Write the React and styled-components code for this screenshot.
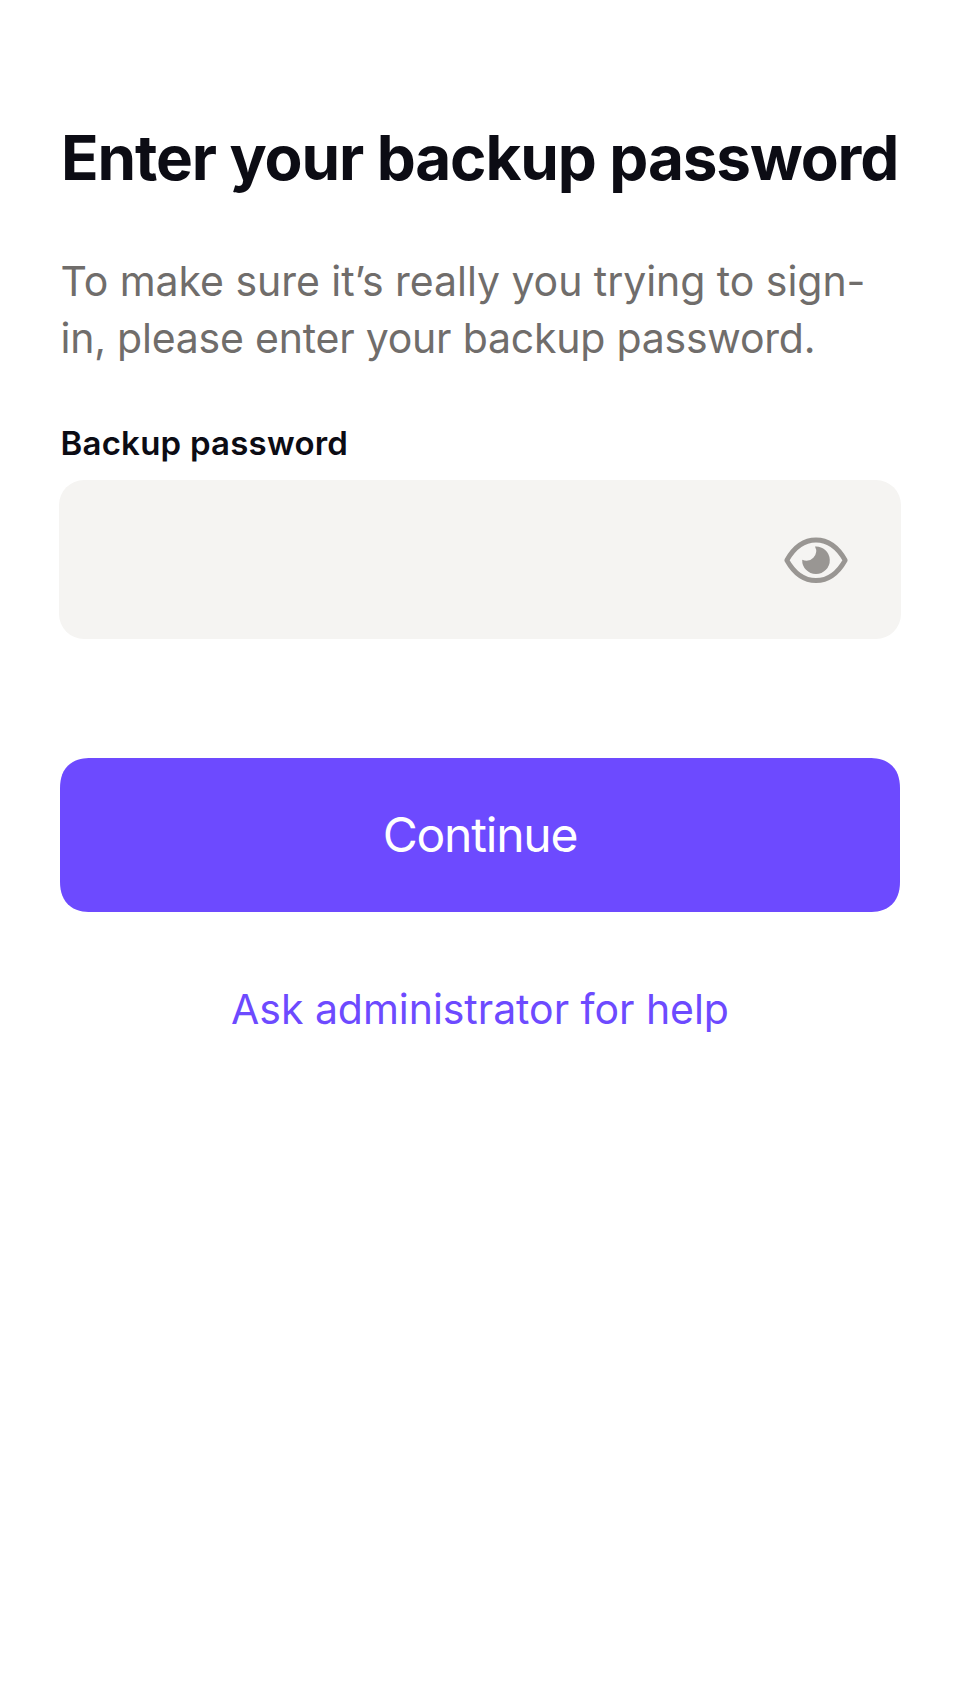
import React from 'react';
import styled, { createGlobalStyle } from 'styled-components';

const GlobalStyle = createGlobalStyle`
  * { box-sizing: border-box; }
  body { margin: 0; background: #fff; font-family: Inter, "Liberation Sans", sans-serif; }
`;

const Screen = styled.main`
  min-height: 1704px;
  padding: 120px 60px 0;
  display: flex;
  flex-direction: column;
`;

const Title = styled.h1`
  margin: 0;
  padding-left: 1px;
  font-size: 62px;
  line-height: 75px;
  font-weight: 700;
  letter-spacing: -1.12px;
  color: #0c0c14;
  white-space: nowrap;
`;

const Description = styled.p`
  margin: 58px 0 0;
  padding-left: 0.5px;
  font-size: 41px;
  line-height: 57px;
  color: #706d6b;
  white-space: nowrap;
`;

const Line = styled.span`
  display: block;
  letter-spacing: ${({ $tracking }) => $tracking}px;
`;

const Label = styled.label`
  margin-top: 56px;
  padding-left: 0.5px;
  font-size: 33px;
  line-height: 40px;
  font-weight: 600;
  letter-spacing: 0.23px;
  color: #0c0c14;
`;

const Field = styled.div`
  margin: 17px -1px 0;
  height: 159px;
  padding: 0 53px 0 40px;
  display: flex;
  align-items: center;
  border-radius: 25px;
  background: #f5f4f2;
`;

const PasswordInput = styled.input`
  flex: 1;
  min-width: 0;
  border: 0;
  outline: 0;
  background: transparent;
  font: inherit;
  font-size: 41px;
`;

const RevealButton = styled.button`
  padding: 0;
  border: 0;
  background: none;
  display: flex;
  color: #999693;
`;

const PrimaryButton = styled.button`
  margin-top: 119px;
  height: 154px;
  padding: 0 0 1px;
  border: 0;
  border-radius: 26px;
  background: #6d4aff;
  color: #fff;
  font-family: inherit;
  font-size: 48px;
  font-weight: 400;
  letter-spacing: -1.2px;

  @supports (corner-shape: superellipse(1.3)) {
    border-radius: 31px;
    corner-shape: superellipse(1.25);
  }
`;

const HelpLink = styled.a`
  margin-top: 72px;
  align-self: center;
  font-size: 41px;
  line-height: 50px;
  letter-spacing: -0.04px;
  color: #6d4aff;
  text-decoration: none;
`;

const EyeIcon = () => (
  <svg width="64" height="46" viewBox="0 0 64 46" fill="none">
    <path
      d="M2.800 23.200C10 10.500 19.500 3 32 3S54 10.500 61.200 23.200C54 36 44.500 43.500 32 43.500S10 36 2.800 23.200Z"
      stroke="currentColor"
      strokeWidth="4.800"
      strokeLinejoin="round"
    />
    <path d="M31 9.500A13.800 13.800 0 1 1 18.200 22.700A9.700 9.700 0 0 0 31 9.500Z" fill="currentColor" />
  </svg>
);

export default function App() {
  return (
    <>
      <GlobalStyle />
      <Screen>
        <Title>Enter your backup password</Title>
        <Description>
          <Line $tracking={-0.05}>To make sure it’s really you trying to sign-</Line>
          <Line $tracking={-0.22}>in, please enter your backup password.</Line>
        </Description>
        <Label htmlFor="backup">Backup password</Label>
        <Field>
          <PasswordInput id="backup" type="password" />
          <RevealButton aria-label="Show password"><EyeIcon /></RevealButton>
        </Field>
        <PrimaryButton>Continue</PrimaryButton>
        <HelpLink>Ask administrator for help</HelpLink>
      </Screen>
    </>
  );
}
